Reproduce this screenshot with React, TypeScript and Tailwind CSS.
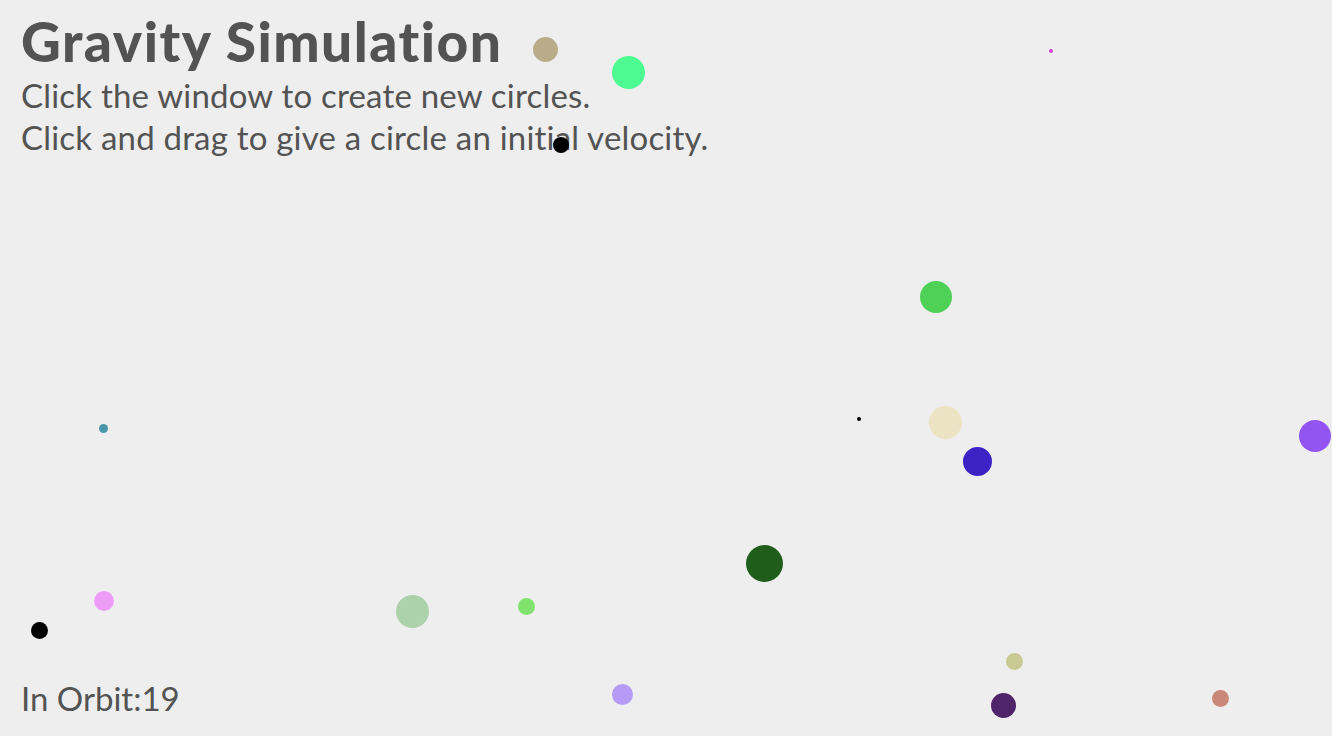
type Ball = {
  x: number;
  y: number;
  d: number;
  color: string;
};

// centre x/y and diameter, as they sit on the canvas
const balls: Ball[] = [
  { x: 545, y: 49, d: 25, color: "#b8ad88" },
  { x: 628, y: 72, d: 33, color: "#4dfa92" },
  { x: 561, y: 145, d: 16, color: "#000000" },
  { x: 1051, y: 51, d: 4, color: "#e040f0" },
  { x: 936, y: 297, d: 32, color: "#4dd257" },
  { x: 103, y: 428, d: 9, color: "#4a97a8" },
  { x: 859, y: 419, d: 4, color: "#000000" },
  { x: 945, y: 422, d: 33, color: "#ebe3c1" },
  { x: 977, y: 461, d: 29, color: "#3d23c6" },
  { x: 1315, y: 436, d: 32, color: "#9255f2" },
  { x: 764, y: 563, d: 37, color: "#1f5e1a" },
  { x: 104, y: 601, d: 20, color: "#ed9cf7" },
  { x: 412, y: 611, d: 33, color: "#acd2ac" },
  { x: 526, y: 606, d: 17, color: "#80e36e" },
  { x: 39, y: 630, d: 17, color: "#000000" },
  { x: 1014, y: 661, d: 17, color: "#c9c994" },
  { x: 622, y: 694, d: 21, color: "#b59bf6" },
  { x: 1003, y: 705, d: 25, color: "#4f2468" },
  { x: 1220, y: 698, d: 17, color: "#c9887a" },
];

export default function App() {
  return (
    <div className="relative h-screen w-full overflow-hidden bg-[#eeeeee] text-[#535353] font-['Lato',sans-serif]">
      <div className="flex h-full flex-col justify-between px-[21px] pt-[8px] pb-[18px]">
        <div>
          <h1 className="text-[55px] font-black tracking-[1.5px] leading-[66px]">Gravity Simulation</h1>
          <p className="text-[33px] tracking-[0.2px] leading-[42px]">Click the window to create new circles.</p>
          <p className="text-[33px] tracking-[0.2px] leading-[42px]">Click and drag to give a circle an initial velocity.</p>
        </div>
        <div className="text-[33px] leading-[40px]">In Orbit:19</div>
      </div>
      {balls.map((b, i) => (
        <div
          key={i}
          className="absolute rounded-full"
          style={{
            left: b.x - b.d / 2,
            top: b.y - b.d / 2,
            width: b.d,
            height: b.d,
            backgroundColor: b.color,
          }}
        />
      ))}
    </div>
  );
}
